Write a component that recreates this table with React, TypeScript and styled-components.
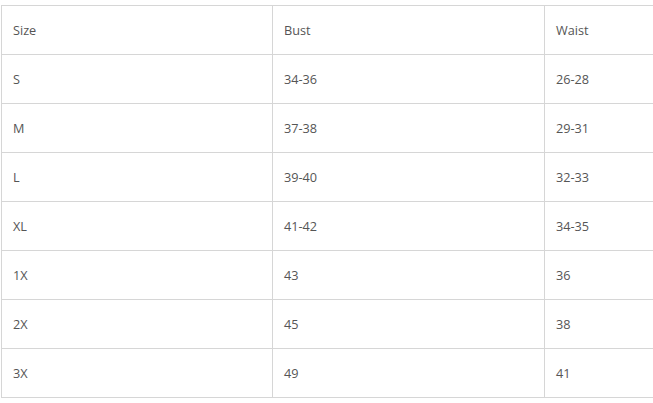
import React from "react";
import styled, { createGlobalStyle } from "styled-components";

const Global = createGlobalStyle`
  html, body { margin: 0; padding: 0; background: #ffffff; }
  body { overflow: hidden; }
`;

const Wrap = styled.div`
  padding: 5px 0 0 1px;
  width: 652px;
  overflow: hidden;
`;

const Table = styled.table`
  border-collapse: collapse;
  width: 816px;
  table-layout: fixed;
  font-family: "Open Sans", "Noto Sans", sans-serif;
  font-size: 12.7px;
  color: #555555;
`;

const Col = styled.col<{ $w: number }>`
  width: ${(p) => p.$w}px;
`;

const Cell = styled.td`
  border: 1px solid #d6d6d6;
  height: 49px;
  padding: 0 0 1px 11px;
  box-sizing: border-box;
  vertical-align: middle;
  text-align: left;
  font-weight: 400;
`;

const rows: [string, string, string][] = [
  ["Size", "Bust", "Waist"],
  ["S", "34-36", "26-28"],
  ["M", "37-38", "29-31"],
  ["L", "39-40", "32-33"],
  ["XL", "41-42", "34-35"],
  ["1X", "43", "36"],
  ["2X", "45", "38"],
  ["3X", "49", "41"],
];

export default function App() {
  return (
    <>
      <Global />
      <Wrap>
        <Table>
          <colgroup>
            <Col $w={271} />
            <Col $w={272} />
            <Col $w={273} />
          </colgroup>
          <tbody>
            {rows.map((r, i) => (
              <tr key={i}>
                {r.map((c, j) => (
                  <Cell key={j}>{c}</Cell>
                ))}
              </tr>
            ))}
          </tbody>
        </Table>
      </Wrap>
    </>
  );
}
